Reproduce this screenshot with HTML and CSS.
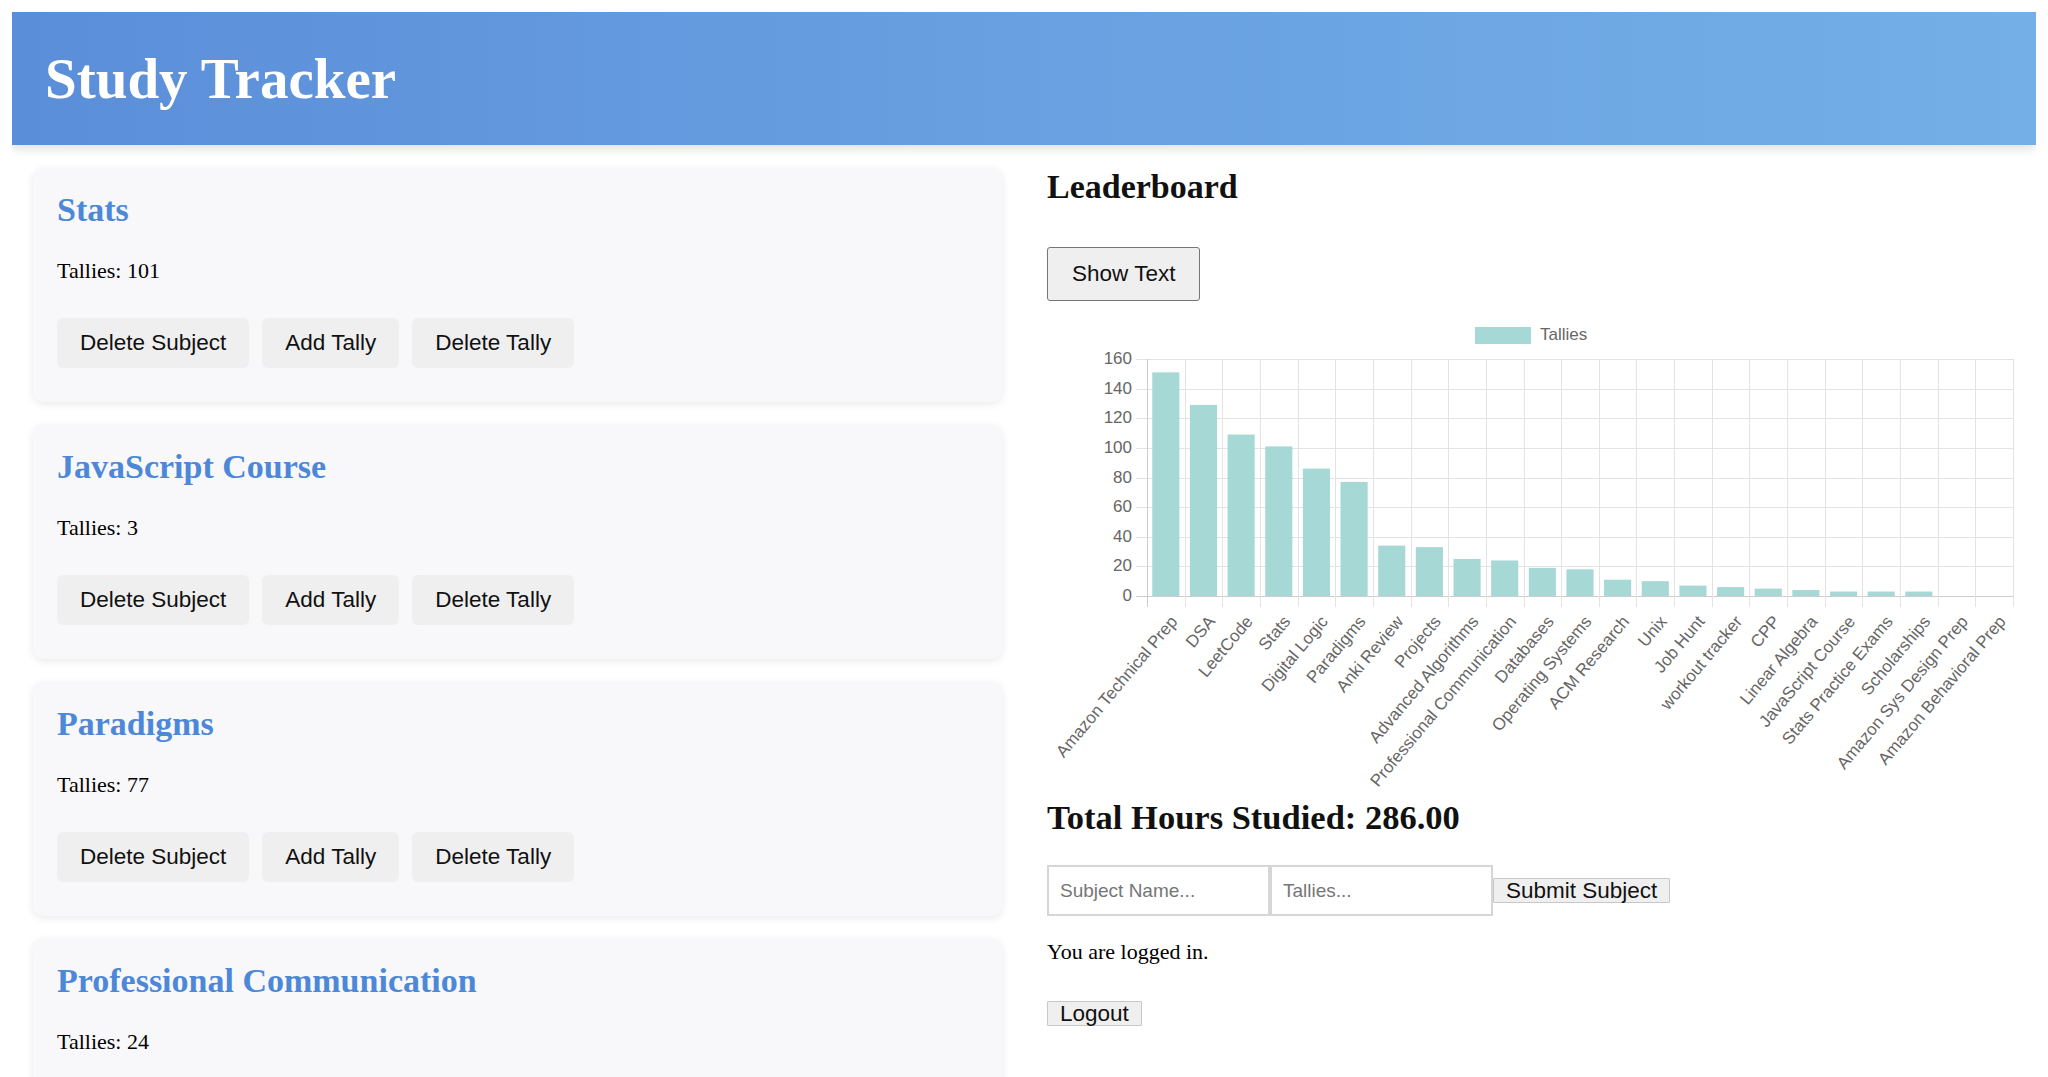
FILE: index.html
```html
<!DOCTYPE html>
<html lang="en">
<head>
<meta charset="utf-8">
<title>Study Tracker</title>
<link rel="stylesheet" href="styles.css">
</head>
<body>
<header class="app-header">
  <h1 class="app-title">Study Tracker</h1>
</header>
<main class="layout">
  <section class="subjects">
    <div class="card">
      <h2 class="card-title">Stats</h2>
      <p class="card-text">Tallies: 101</p>
      <div class="card-actions">
        <button class="btn">Delete Subject</button>
        <button class="btn">Add Tally</button>
        <button class="btn">Delete Tally</button>
      </div>
    </div>
    <div class="card">
      <h2 class="card-title">JavaScript Course</h2>
      <p class="card-text">Tallies: 3</p>
      <div class="card-actions">
        <button class="btn">Delete Subject</button>
        <button class="btn">Add Tally</button>
        <button class="btn">Delete Tally</button>
      </div>
    </div>
    <div class="card">
      <h2 class="card-title">Paradigms</h2>
      <p class="card-text">Tallies: 77</p>
      <div class="card-actions">
        <button class="btn">Delete Subject</button>
        <button class="btn">Add Tally</button>
        <button class="btn">Delete Tally</button>
      </div>
    </div>
    <div class="card">
      <h2 class="card-title">Professional Communication</h2>
      <p class="card-text">Tallies: 24</p>
      <div class="card-actions">
        <button class="btn">Delete Subject</button>
        <button class="btn">Add Tally</button>
        <button class="btn">Delete Tally</button>
      </div>
    </div>
  </section>
  <section class="board">
    <h2 class="board-title">Leaderboard</h2>
    <button class="toggle-btn">Show Text</button>
    <svg id="chart" class="chart" width="977" height="480" viewBox="0 0 977 480"></svg>
    <h2 class="total">Total Hours Studied: 286.00</h2>
    <form class="add-form">
      <input class="field" type="text" placeholder="Subject Name...">
      <input class="field" type="text" placeholder="Tallies...">
      <button class="plain-btn" type="button">Submit Subject</button>
    </form>
    <p class="status">You are logged in.</p>
    <button class="plain-btn">Logout</button>
  </section>
</main>
<script src="script.js"></script>
</body>
</html>
```

FILE: styles.css
```css
* {
  box-sizing: border-box;
}

body {
  margin: 12px;
  font-family: "Liberation Serif", "Times New Roman", serif;
  color: #000;
  background: #fff;
}

.app-header {
  background: linear-gradient(90deg, #5b8ed9 0%, #68a0e1 50%, #74afe7 100%);
  padding: 35px 33px 34px;
  box-shadow: 0 4px 10px rgba(0, 0, 0, 0.12);
}

.app-title {
  margin: 0;
  font-size: 57px;
  line-height: 64px;
  font-weight: bold;
  color: #fff;
}

.layout {
  display: grid;
  grid-template-columns: 969px 977px;
  column-gap: 45px;
  align-items: start;
  padding: 23px 12px 0 21px;
}

.card {
  background: #f8f8fa;
  border-radius: 10px;
  box-shadow: 0 2px 8px rgba(0, 0, 0, 0.09);
  padding: 22px 24px 34px;
  margin-bottom: 23px;
}

.card-title {
  margin: 0 0 29px;
  font-size: 34px;
  line-height: 39px;
  font-weight: bold;
  color: #4d88d8;
}

.card-text {
  margin: 0 0 35px;
  font-size: 22px;
  line-height: 25px;
}

.card-actions {
  display: flex;
  gap: 13px;
}

.btn {
  font-family: "Liberation Sans", Arial, sans-serif;
  font-size: 22.5px;
  line-height: 26px;
  padding: 12px 23px;
  border: none;
  border-radius: 6px;
  background: #efefef;
  color: #111;
}

.board {
  display: flex;
  flex-direction: column;
  align-items: flex-start;
}

.board-title {
  margin: 1px 0 0;
  font-size: 34px;
  line-height: 36px;
  font-weight: bold;
  color: #111;
}

.toggle-btn {
  margin-top: 42px;
  font-family: "Liberation Sans", Arial, sans-serif;
  font-size: 22.5px;
  line-height: 26px;
  padding: 13px 24px;
  border: 1px solid #767676;
  border-radius: 3px;
  background: #efefef;
  color: #111;
}

.chart {
  display: block;
  margin-top: 12px;
}

.chart .grid {
  stroke: #e3e3e3;
  stroke-width: 1;
}

.chart .axis {
  stroke: #cdcdcd;
  stroke-width: 1;
}

.chart .bar {
  fill: #a6d8d6;
}

.chart .ytick,
.chart .xtick,
.chart .legend-text {
  font-family: "Liberation Sans", Arial, sans-serif;
  font-size: 17px;
  fill: #666;
  dominant-baseline: middle;
}

.chart .ytick,
.chart .xtick {
  text-anchor: end;
}

.total {
  margin: 5px 0 0;
  font-size: 34.5px;
  line-height: 39px;
  font-weight: bold;
  color: #111;
}

.add-form {
  display: flex;
  align-items: center;
  margin: 28px 0 0;
}

.field {
  width: 223px;
  height: 51px;
  padding: 0 11px;
  border: 2px solid #d6d6d6;
  font-family: "Liberation Sans", Arial, sans-serif;
  font-size: 19px;
  color: #111;
  background: #fff;
}

.field::placeholder {
  color: #767676;
}

.plain-btn {
  font-family: "Liberation Sans", Arial, sans-serif;
  font-size: 22.5px;
  line-height: 23px;
  padding: 0 12px;
  border: 1px solid #c8c8c8;
  border-radius: 1px;
  background: #efefef;
  color: #111;
}

.status {
  margin: 23px 0 37px;
  font-size: 22px;
  line-height: 25px;
}
```

FILE: script.js
```js
(function () {
  var data = [
    ["Amazon Technical Prep", 151], ["DSA", 129], ["LeetCode", 109], ["Stats", 101],
    ["Digital Logic", 86], ["Paradigms", 77], ["Anki Review", 34], ["Projects", 33],
    ["Advanced Algorithms", 25], ["Professional Communication", 24], ["Databases", 19],
    ["Operating Systems", 18], ["ACM Research", 11], ["Unix", 10], ["Job Hunt", 7],
    ["workout tracker", 6], ["CPP", 5], ["Linear Algebra", 4], ["JavaScript Course", 3],
    ["Stats Practice Exams", 3], ["Scholarships", 3], ["Amazon Sys Design Prep", 0],
    ["Amazon Behavioral Prep", 0]
  ];
  var NS = "http://www.w3.org/2000/svg";
  var svg = document.getElementById("chart");
  if (!svg) return;
  var X0 = 100, X1 = 966, Y0 = 46, YZ = 283, TICK = 11;
  var cw = (X1 - X0) / data.length;
  var unit = (YZ - Y0) / 160;

  function el(tag, attrs, text) {
    var e = document.createElementNS(NS, tag);
    for (var k in attrs) e.setAttribute(k, attrs[k]);
    if (text !== undefined) e.textContent = text;
    svg.appendChild(e);
    return e;
  }

  el("rect", { x: 428, y: 14, width: 56, height: 17, "class": "bar" });
  el("text", { x: 493, y: 23, "class": "legend-text" }, "Tallies");

  for (var v = 0; v <= 160; v += 20) {
    var y = Math.round(YZ - v * unit) + 0.5;
    el("line", { x1: X0 - TICK, x2: X1, y1: y, y2: y, "class": v === 0 ? "axis" : "grid" });
    el("text", { x: X0 - 15, y: y, "class": "ytick" }, String(v));
  }

  for (var i = 0; i <= data.length; i++) {
    var x = Math.round(X0 + i * cw) + 0.5;
    el("line", { x1: x, x2: x, y1: Y0, y2: YZ + TICK, "class": i === 0 ? "axis" : "grid" });
  }

  data.forEach(function (d, i) {
    var cx = X0 + (i + 0.5) * cw;
    var bw = cw * 0.72;
    var h = d[1] * unit;
    if (h > 0) {
      el("rect", { x: cx - bw / 2, y: YZ - h, width: bw, height: h, "class": "bar" });
    }
    el("text", {
      x: 0, y: 0, "class": "xtick",
      transform: "translate(" + (cx + 9).toFixed(1) + "," + (YZ + 23) + ") rotate(-50)"
    }, d[0]);
  });
})();
```
